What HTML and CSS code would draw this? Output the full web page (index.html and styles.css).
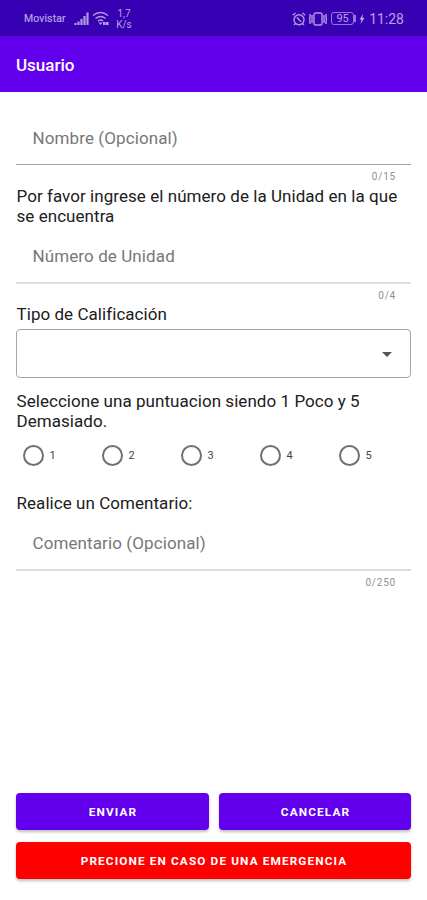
FILE: index.html
```html
<!DOCTYPE html>
<html lang="es">
<head>
<meta charset="utf-8">
<title>Usuario</title>
<link rel="stylesheet" href="styles.css">
</head>
<body>
<div class="status">
  <span class="carrier">Movistar</span>
  <svg class="signal" width="15" height="14" viewBox="0 0 15 14"><path d="M1.500 11v2M4.500 9.500v3.500M7.500 7v6M10.500 4v9M13.500 .5v12.500"/></svg>
  <svg class="wifi" width="17" height="15" viewBox="0 0 17 15"><path d="M1 4.500Q8.500-1.500 16 4.500M3.500 7.500Q8.500 3.500 13.500 7.500M6 10.200Q8.500 8 11 10.200"/><path class="fill" d="M6.500 11.500h4L8.500 14zM11 11h2.500v3H11zM14 11h2.500v3H14z"/></svg>
  <span class="speed">1,7<br>K/s</span>
  <svg class="alarm" width="14" height="14" viewBox="0 0 14 14"><circle cx="7" cy="7.700" r="5"/><path d="M.8 3.200 3.500 1M13.200 3.200 10.500 1M5 5.200l2 2.500 2.200 2M3.500 11.500 2 13M10.500 11.500 12 13"/></svg>
  <svg class="vibrate" width="18" height="14" viewBox="0 0 18 14"><rect x="5" y="1" width="8" height="12" rx="1.500"/><path d="M3 3v8M15 3v8M1 2v3l-.5 2 .5 2v3M17 2v3l.5 2-.5 2v3"/></svg>
  <span class="battery">95</span>
  <svg class="bolt" width="6" height="10" viewBox="0 0 6 10"><path d="M4 0 .5 5.500h2L1.500 10 5.500 4H3.500z"/></svg>
  <span class="time">11:28</span>
</div>
<header class="appbar">Usuario</header>
<main class="form">
  <div class="field first"><span>Nombre (Opcional)</span></div>
  <div class="counter">0/15</div>
  <p class="text unit">Por favor ingrese el número de la Unidad en la que<br>se encuentra</p>
  <div class="field second"><span>Número de Unidad</span></div>
  <div class="counter">0/4</div>
  <p class="text type">Tipo de Calificación</p>
  <div class="select"><i class="caret"></i></div>
  <p class="text score">Seleccione una puntuacion siendo 1 Poco y 5<br>Demasiado.</p>
  <div class="radios">
    <label><i></i>1</label><label><i></i>2</label><label><i></i>3</label><label><i></i>4</label><label><i></i>5</label>
  </div>
  <p class="text comment">Realice un Comentario:</p>
  <div class="field third"><span>Comentario (Opcional)</span></div>
  <div class="counter">0/250</div>
</main>
<footer class="actions">
  <button>ENVIAR</button>
  <button>CANCELAR</button>
  <button class="emergency">PRECIONE EN CASO DE UNA EMERGENCIA</button>
</footer>
</body>
</html>
```
FILE: styles.css
```css
* { box-sizing: border-box; }
body {
  margin: 0;
  height: 900px;
  display: flex;
  flex-direction: column;
  background: #fff;
  font-family: Roboto, sans-serif;
  overflow: hidden;
}
.status {
  height: 36px;
  flex: none;
  display: flex;
  align-items: center;
  padding: 1px 23px 0 24px;
  background: #3800b3;
  color: #b9a2e6;
}
.status svg { flex: none; fill: none; stroke: #b09ae2; stroke-width: 1.4; }
.carrier { width: 50px; font-size: 10.5px; letter-spacing: .1px; -webkit-text-stroke: .2px; }
.signal { margin-right: 3px; }
.status .signal { stroke-width: 2.2; }
.status .fill, .status .bolt { fill: #b9a2e6; stroke: none; }
.speed { margin-left: 6px; width: 18px; font-size: 10px; line-height: 11px; text-align: center; }
.alarm { margin-left: auto; }
.vibrate { margin-left: 3px; }
.battery {
  position: relative;
  width: 23px;
  height: 13px;
  margin-left: 4px;
  border: 1px solid #9479d8;
  border-radius: 3px;
  font-size: 11px;
  line-height: 11px;
  text-align: center;
}
.battery::after {
  content: "";
  position: absolute;
  right: -3px;
  top: 2px;
  width: 2px;
  height: 7px;
  background: #9479d8;
}
.bolt { margin: 0 4px 0 5px; }
.time { font-size: 14px; }
.appbar {
  height: 56px;
  flex: none;
  padding: 1px 16px 0;
  background: #6200ee;
  color: #fff;
  font-size: 17px;
  font-weight: 500;
  line-height: 56px;
}
.form { padding: 18px 16px 0; flex: 1; }
.field {
  padding: 0 16.5px;
  border-bottom: 2px solid #dcdcdc;
  color: #777;
  font-size: 17px;
  letter-spacing: .1px;
}
.first { height: 55px; line-height: 56px; border-bottom: 1px solid #a0a0a0; }
.second { height: 58px; line-height: 60px; }
.third { height: 58px; line-height: 60px; }
.counter {
  height: 21px;
  padding-right: 15px;
  color: #909090;
  font-size: 10px;
  line-height: 24px;
  letter-spacing: .8px;
  text-align: right;
}
.text { margin: 0; padding-left: .5px; color: #202020; font-size: 17px; line-height: 20px; letter-spacing: .05px; white-space: nowrap; }
.type { height: 20px; line-height: 18px; }
.select {
  height: 49px;
  margin-top: 4px;
  padding: 1px 18px 0 0;
  display: flex;
  align-items: center;
  justify-content: flex-end;
  border: 1px solid #a6a6a6;
  border-radius: 4px;
}
.caret { border: 5px solid transparent; border-top-color: #555; border-bottom: 0; }
.score { margin-top: 13px; }
.radios { display: grid; grid-template-columns: repeat(5, 79px); height: 48px; }
.radios label { display: flex; align-items: center; padding-left: 6.5px; color: #444; font-size: 11px; }
.radios i { width: 21px; height: 21px; margin-right: 6px; border: 2px solid #707070; border-radius: 50%; }
.comment { margin-top: 14px; }
.actions {
  display: grid;
  grid-template-columns: 193px 192px;
  grid-auto-rows: 37px;
  gap: 12px 10px;
  padding: 0 16px 21px;
}
.actions button {
  border: 0;
  padding: 0 0 0 1px;
  border-radius: 4px;
  background: #6200ee;
  color: #fff;
  font: 700 11.8px Roboto, sans-serif;
  letter-spacing: 1.12px;
  box-shadow: 0 2px 3px rgba(0, 0, 0, .25);
}
.actions .emergency { grid-column: 1 / -1; background: #f00; }
```
